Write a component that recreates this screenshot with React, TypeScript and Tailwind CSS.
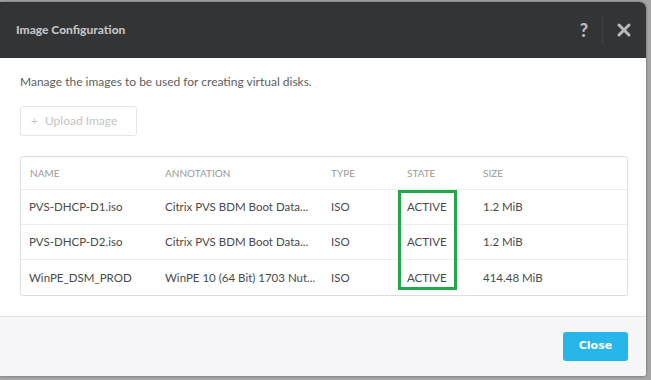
import React from "react";

const rows = [
  { name: "PVS-DHCP-D1.iso", ann: "Citrix PVS BDM Boot Data...", type: "ISO", state: "ACTIVE", size: "1.2 MiB" },
  { name: "PVS-DHCP-D2.iso", ann: "Citrix PVS BDM Boot Data...", type: "ISO", state: "ACTIVE", size: "1.2 MiB" },
  { name: "WinPE_DSM_PROD", ann: "WinPE 10 (64 Bit) 1703 Nut...", type: "ISO", state: "ACTIVE", size: "414.48 MiB" },
];

export default function App() {
  return (
    <div className="w-[651px] h-[380px] bg-[#a5a5a5] overflow-hidden relative" style={{ fontFamily: "Lato, 'Open Sans', sans-serif" }}>
      <div className="absolute left-0 top-[2px] w-[646px] h-[374px] rounded-tr-[6px] rounded-br-[3px] overflow-hidden flex flex-col bg-white shadow-[0_0_3px_rgba(0,0,0,0.4)]">
        <div className="h-[56px] bg-[#333436] flex items-center pl-[16px] pr-[15px] shrink-0">
          <div className="text-[12px] font-black text-[#c2c2c2] flex-1">Image Configuration</div>
          <div className="text-[18px] font-black text-[#b9b9b9] w-[20px] text-center">?</div>
          <div className="w-px h-[30px] bg-[#3f4042] ml-[8px] mr-[14px]"></div>
          <svg width="14" height="14" viewBox="0 0 14 14">
            <path d="M2 2 L12 12 M12 2 L2 12" stroke="#b9b9b9" strokeWidth="3" strokeLinecap="round" />
          </svg>
        </div>
        <div className="flex-1 px-[20px] pt-[17px]">
          <div className="text-[12px] text-[#5e5e5e] leading-[14px]">Manage the images to be used for creating virtual disks.</div>
          <div className="mt-[17px] w-[117px] h-[30px] border border-[#e6e6e6] rounded-[3px] flex items-center pl-[10px] text-[12px] text-[#c4c4c4]">
            <span className="mr-[7px] text-[12px]">+</span>Upload Image
          </div>
          <div className="mt-[20px] w-[608px] border border-[#dedede] rounded-[3px]">
            <div className="h-[33px] flex items-center text-[10px] text-[#9a9a9a] border-b border-[#ececec]">
              <div className="w-[144px] pl-[9px]">NAME</div>
              <div className="w-[166px]">ANNOTATION</div>
              <div className="w-[76px]">TYPE</div>
              <div className="w-[76px]">STATE</div>
              <div>SIZE</div>
            </div>
            {rows.map((r, i) => (
              <div key={i} className={`h-[35px] flex items-center text-[11.5px] text-[#4a4a4a] ${i < 2 ? "border-b border-[#ececec]" : ""}`}>
                <div className="w-[144px] pl-[8px]">{r.name}</div>
                <div className="w-[166px]">{r.ann}</div>
                <div className="w-[76px]">{r.type}</div>
                <div className="w-[76px] relative">{r.state}</div>
                <div>{r.size}</div>
              </div>
            ))}
          </div>
        </div>
        <div className="h-[60px] shrink-0 bg-[#f7f7f9] border-t border-[#e2e2e4] flex items-center justify-end pr-[18px]">
          <div className="w-[65px] h-[29px] bg-[#27b6ea] rounded-[3px] flex items-center justify-center text-white text-[11px] font-bold" style={{ fontFamily: "'DejaVu Sans', sans-serif" }}>Close</div>
        </div>
      </div>
      <div className="absolute left-[398px] top-[190px] w-[59px] h-[100px] border-[3px] border-[#22a84a]"></div>
    </div>
  );
}
